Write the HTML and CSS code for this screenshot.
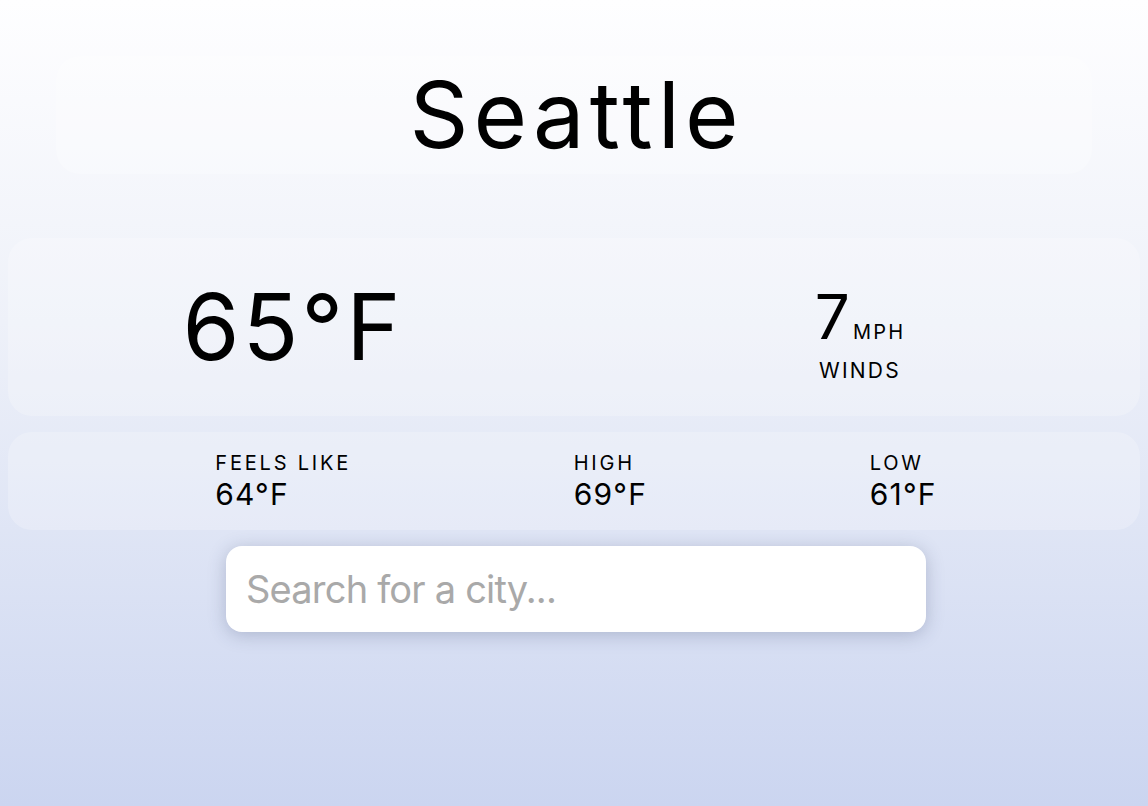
FILE: index.html
```html
<!DOCTYPE html>
<html lang="en">
<head>
<meta charset="utf-8">
<title>Weather</title>
<link rel="stylesheet" href="styles.css">
</head>
<body>
<main class="app">
  <section class="title-card">
    <h1 class="city">Seattle</h1>
  </section>
  <section class="card current">
    <div class="temp">65°F</div>
    <div class="wind">
      <div class="wind-value"><span class="wind-num">7</span><span class="wind-unit">MPH</span></div>
      <div class="wind-label">WINDS</div>
    </div>
  </section>
  <section class="card details">
    <div class="detail">
      <div class="detail-label">FEELS LIKE</div>
      <div class="detail-value">64°F</div>
    </div>
    <div class="detail">
      <div class="detail-label">HIGH</div>
      <div class="detail-value">69°F</div>
    </div>
    <div class="detail">
      <div class="detail-label">LOW</div>
      <div class="detail-value">61°F</div>
    </div>
  </section>
  <div class="search-wrap">
    <input class="search" type="text" placeholder="Search for a city...">
  </div>
</main>
</body>
</html>
```
FILE: styles.css
```css
html {
  min-height: 100%;
  background: linear-gradient(to bottom, #fefeff 0%, #eef1f9 40%, #cbd5f0 100%);
}

body {
  margin: 8px;
  min-height: calc(100vh - 16px);
  font-family: "Inter", "Open Sans", sans-serif;
  color: #000;
}

.app {
  display: flex;
  flex-direction: column;
  align-items: center;
  gap: 16px;
  padding-bottom: 80px;
}

.title-card {
  align-self: stretch;
  margin: 48px;
  height: 118px;
  border-radius: 24px;
  background: rgba(255, 255, 255, 0.25);
  display: flex;
  align-items: center;
  justify-content: center;
}

.city {
  margin: 0;
  font-size: 92px;
  font-weight: 400;
  letter-spacing: 5px;
  line-height: 1;
  padding-left: 5px;
}

.card {
  align-self: stretch;
  border-radius: 24px;
  background: rgba(255, 255, 255, 0.22);
}

.current {
  height: 178px;
  display: grid;
  grid-template-columns: 1fr 1fr;
  align-items: center;
  justify-items: center;
}

.temp {
  font-size: 92px;
  letter-spacing: 3px;
  line-height: 1;
  padding-left: 4px;
}

.wind {
  display: flex;
  flex-direction: column;
  align-items: center;
  padding-top: 14px;
  padding-left: 6px;
}

.wind-value {
  display: flex;
  align-items: baseline;
}

.wind-num {
  font-size: 62px;
  line-height: 1;
}

.wind-unit {
  font-size: 20px;
  letter-spacing: 2.2px;
  margin-left: 3px;
}

.wind-label {
  font-size: 21px;
  letter-spacing: 2.2px;
  margin-top: 10px;
}

.details {
  height: 98px;
  display: flex;
  align-items: center;
  justify-content: space-around;
  padding: 0 92px 0 96px;
}

.detail-label {
  font-size: 20px;
  letter-spacing: 2.8px;
  line-height: 1.35;
}

.detail-value {
  font-size: 30px;
  letter-spacing: 1.2px;
  line-height: 1.15;
}

.search-wrap {
  width: 700px;
  height: 86px;
  margin-left: 4px;
  border-radius: 16px;
  background: #fff;
  box-shadow: 0 3px 18px rgba(50, 60, 100, 0.26);
}

.search {
  box-sizing: border-box;
  display: block;
  width: 100%;
  height: 100%;
  padding: 0 20px;
  border: none;
  border-radius: 16px;
  background: transparent;
  font-family: "Inter", sans-serif;
  font-size: 38px;
  letter-spacing: -0.8px;
  outline: none;
}

.search::placeholder {
  color: #a9a9a9;
}
```
